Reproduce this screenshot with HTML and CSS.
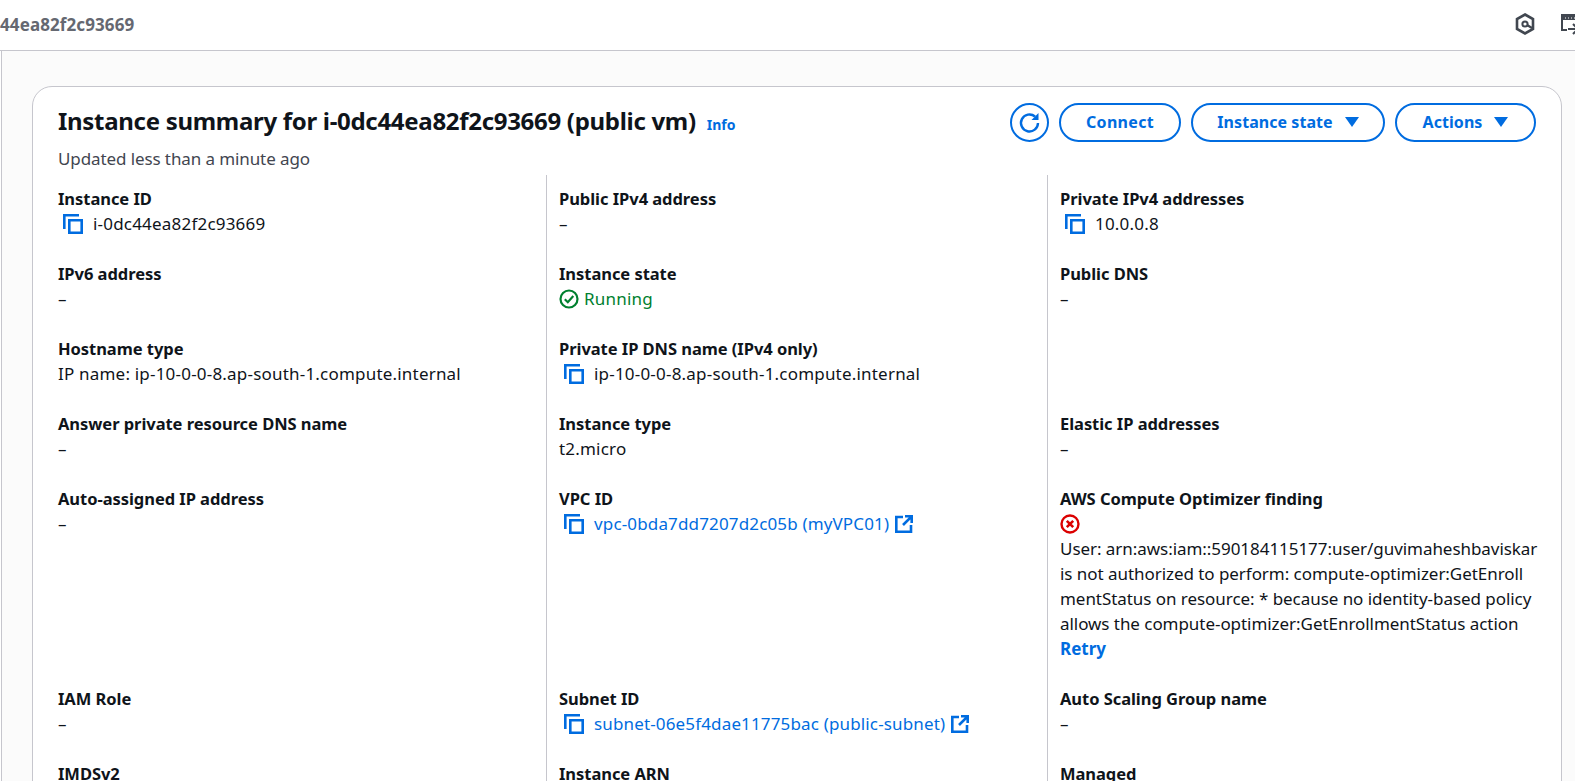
FILE: index.html
```html
<!DOCTYPE html>
<html lang="en">

<head>
  <meta charset="UTF-8">
  <title>Instance summary</title>
  <link rel="stylesheet" href="styles.css">
</head>

<body>

  <svg class="icon-defs" width="0" height="0">
    <symbol id="copy" viewBox="0 0 20 20">
      <path d="M1.300 15V1.300H16M6.300 6.300h12.400v12.400H6.300z" fill="none" stroke="currentColor" stroke-width="2.600" />
    </symbol>
    <symbol id="external" viewBox="0 0 18 18">
      <path d="M8 2H1.300v14.700H16V10M10 1.300h6.700V8M16.700 1.300 8 10" fill="none" stroke="currentColor" stroke-width="2.600" />
    </symbol>
  </svg>

  <header class="top-bar">
    <span class="crumb">44ea82f2c93669</span>
    <div class="top-icons">
      <svg width="22" height="24" viewBox="0 0 22 24">
        <path d="M11 2.500 19 7v10l-8 4.500L3 17V7z" fill="none" stroke="#414750" stroke-width="2.600" />
        <circle cx="11" cy="12" r="2.600" fill="none" stroke="#414750" stroke-width="2" />
        <path d="M13 13l5 3" stroke="#414750" stroke-width="2.200" />
      </svg>
      <svg width="22" height="24" viewBox="0 0 22 24">
        <path d="M7 18H2V3h17v8" fill="none" stroke="#414750" stroke-width="2" />
        <path d="M2 4h17v4H2z" fill="#414750" />
        <path d="M5 6h1M8 6h1M11 6h1M14 6h1" stroke="#fff" stroke-width="1.200" />
        <path d="M8 17h9M13 12l5 5-5 5" fill="none" stroke="#414750" stroke-width="2" />
      </svg>
    </div>
  </header>

  <main class="content">
    <section class="card">
      <div class="card-head">
        <div>
          <h1>Instance summary for i-0dc44ea82f2c93669 (public vm) <a class="info" href="#">Info</a></h1>
          <p class="updated">Updated less than a minute ago</p>
        </div>
        <div class="actions">
          <button class="btn btn-round" aria-label="Refresh">
            <svg width="24" height="24" viewBox="0 0 24 24">
              <path d="M20 12a8.500 8.500 0 1 1-3-6.500" fill="none" stroke="currentColor" stroke-width="2.400" />
              <path d="M20.500 2v7h-7z" fill="currentColor" />
            </svg>
          </button>
          <button class="btn btn-connect">Connect</button>
          <button class="btn btn-state">Instance state <span class="caret"></span></button>
          <button class="btn btn-actions">Actions <span class="caret"></span></button>
        </div>
      </div>

      <div class="details">
        <div class="field">
          <div class="label">Instance ID</div>
          <div class="value copy"><svg class="copy-icon"><use href="#copy" /></svg>i-0dc44ea82f2c93669</div>
        </div>
        <div class="field">
          <div class="label">Public IPv4 address</div>
          <div class="value">–</div>
        </div>
        <div class="field">
          <div class="label">Private IPv4 addresses</div>
          <div class="value copy"><svg class="copy-icon"><use href="#copy" /></svg>10.0.0.8</div>
        </div>

        <div class="field">
          <div class="label">IPv6 address</div>
          <div class="value">–</div>
        </div>
        <div class="field">
          <div class="label">Instance state</div>
          <div class="value running">
            <svg width="20" height="20" viewBox="0 0 20 20">
              <circle cx="10" cy="10" r="8.500" fill="none" stroke="currentColor" stroke-width="2.200" />
              <path d="M5.800 10.200 8.800 13.200 14.300 7" fill="none" stroke="currentColor" stroke-width="2.200" />
            </svg>
            Running
          </div>
        </div>
        <div class="field">
          <div class="label">Public DNS</div>
          <div class="value">–</div>
        </div>

        <div class="field">
          <div class="label">Hostname type</div>
          <div class="value">IP name: ip-10-0-0-8.ap-south-1.compute.internal</div>
        </div>
        <div class="field">
          <div class="label">Private IP DNS name (IPv4 only)</div>
          <div class="value copy"><svg class="copy-icon"><use href="#copy" /></svg>ip-10-0-0-8.ap-south-1.compute.internal</div>
        </div>
        <div class="field"></div>

        <div class="field">
          <div class="label">Answer private resource DNS name</div>
          <div class="value">–</div>
        </div>
        <div class="field">
          <div class="label">Instance type</div>
          <div class="value">t2.micro</div>
        </div>
        <div class="field">
          <div class="label">Elastic IP addresses</div>
          <div class="value">–</div>
        </div>

        <div class="field">
          <div class="label">Auto-assigned IP address</div>
          <div class="value">–</div>
        </div>
        <div class="field">
          <div class="label">VPC ID</div>
          <div class="value copy link">
            <svg class="copy-icon"><use href="#copy" /></svg>vpc-0bda7dd7207d2c05b (myVPC01)
            <svg class="ext-icon"><use href="#external" /></svg>
          </div>
        </div>
        <div class="field">
          <div class="label">AWS Compute Optimizer finding</div>
          <div class="value status-error">
            <svg width="20" height="20" viewBox="0 0 20 20">
              <circle cx="10" cy="10" r="8.500" fill="none" stroke="currentColor" stroke-width="2.400" />
              <path d="M6.800 6.800l6.400 6.400M13.200 6.800l-6.400 6.400" stroke="currentColor" stroke-width="2.600" />
            </svg>
          </div>
          <div class="value message">User: arn:aws:iam::590184115177:user/guvimaheshbaviskar<br>is not authorized to perform: compute-optimizer:GetEnroll<br>mentStatus on resource: * because no identity-based policy<br>allows the compute-optimizer:GetEnrollmentStatus action</div>
          <a class="retry" href="#">Retry</a>
        </div>

        <div class="field">
          <div class="label">IAM Role</div>
          <div class="value">–</div>
        </div>
        <div class="field">
          <div class="label">Subnet ID</div>
          <div class="value copy link">
            <svg class="copy-icon"><use href="#copy" /></svg>subnet-06e5f4dae11775bac (public-subnet)
            <svg class="ext-icon"><use href="#external" /></svg>
          </div>
        </div>
        <div class="field">
          <div class="label">Auto Scaling Group name</div>
          <div class="value">–</div>
        </div>

        <div class="field">
          <div class="label">IMDSv2</div>
        </div>
        <div class="field">
          <div class="label">Instance ARN</div>
        </div>
        <div class="field">
          <div class="label">Managed</div>
        </div>
      </div>
    </section>
  </main>

</body>

</html>
```

FILE: styles.css
```css
html,
body {
  height: 781px;
  overflow: hidden;
}

body {
  margin: 0;
  font-family: "Noto Sans", "Open Sans", sans-serif;
  font-size: 17px;
  line-height: 25px;
  color: #0f141a;
  background-color: #ffffff;
}

.icon-defs {
  display: block;
}

.top-bar {
  display: flex;
  align-items: center;
  justify-content: space-between;
  height: 48px;
  padding-bottom: 2px;
  border-bottom: 1px solid #c6c6cd;
}

.crumb {
  font-weight: 700;
  color: #656871;
  letter-spacing: 0.1px;
}

.top-icons {
  display: flex;
  gap: 24px;
  margin-right: -7px;
}

.content {
  background-color: #fbfbfb;
  border-left: 1px solid #c6c6cd;
  margin-left: 1px;
  padding: 35px 13px 0 30px;
  height: 700px;
}

.card {
  background-color: #ffffff;
  border: 1px solid #c6c6cd;
  border-radius: 20px;
  padding: 16px 25px 0 25px;
  height: 800px;
}

.card-head {
  display: flex;
  justify-content: space-between;
  align-items: flex-start;
}

h1 {
  margin: 3px 0 0;
  font-size: 24px;
  line-height: 30px;
  font-weight: 700;
  letter-spacing: -0.3px;
}

.info {
  margin-left: 5px;
  font-size: 14px;
  color: #006ce0;
  text-decoration: none;
  letter-spacing: 0;
}

.updated {
  margin: 6px 0 0;
  color: #424650;
  letter-spacing: -0.1px;
}

.actions {
  display: flex;
  gap: 10px;
}

.btn {
  display: flex;
  align-items: center;
  justify-content: center;
  height: 39px;
  padding: 0 0 2px;
  font-family: inherit;
  font-size: 16px;
  font-weight: 700;
  color: #006ce0;
  background-color: #ffffff;
  border: 2px solid #006ce0;
  border-radius: 20px;
  box-sizing: border-box;
  letter-spacing: 0.05px;
}

.btn-round {
  width: 39px;
  padding: 0;
  border-radius: 50%;
}

.btn-connect {
  width: 122px;
  letter-spacing: 0.3px;
}

.btn-state {
  width: 194px;
}

.btn-actions {
  width: 141px;
}

.caret {
  width: 0;
  height: 0;
  margin-left: 12px;
  border-left: 7px solid transparent;
  border-right: 7px solid transparent;
  border-top: 10px solid #006ce0;
}

.details {
  display: grid;
  grid-template-columns: 488px 501px 1fr;
  margin-top: 4px;
}

.field {
  padding: 11px 0 14px 12px;
  border-left: 1px solid #c6c6cd;
  letter-spacing: 0.2px;
}

.field:nth-child(3n + 1) {
  padding-left: 0;
  border-left: none;
}

.label {
  font-size: 16.500px;
  font-weight: 700;
  letter-spacing: -0.05px;
}

.value {
  display: flex;
  align-items: center;
  gap: 5px;
  min-height: 25px;
}

.copy {
  gap: 10px;
  padding-left: 5px;
}

.message {
  display: block;
  white-space: nowrap;
  letter-spacing: -0.05px;
}

.copy-icon {
  width: 20px;
  height: 20px;
  color: #006ce0;
  flex: none;
}

.ext-icon {
  width: 18px;
  height: 18px;
  margin-left: -4px;
  color: #006ce0;
  flex: none;
}

.link {
  color: #006ce0;
  letter-spacing: 0.15px;
}

.running {
  color: #00802f;
}

.status-error {
  min-height: 24px;
  padding-top: 1px;
  color: #db0000;
}

.retry {
  font-weight: 700;
  color: #006ce0;
  text-decoration: none;
  letter-spacing: 0;
}
```
